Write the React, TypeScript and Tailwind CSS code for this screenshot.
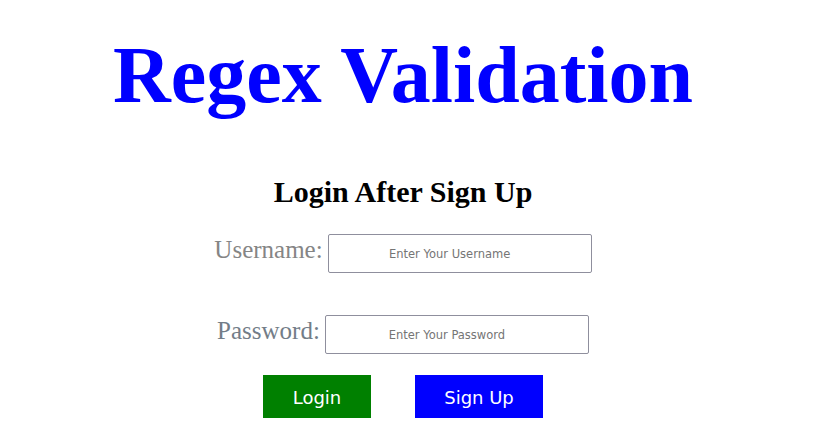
import React, { useState } from "react";

const serif = { fontFamily: '"Liberation Serif", "Times New Roman", serif' };

export default function App() {
  const [username, setUsername] = useState("");
  const [password, setPassword] = useState("");

  const inputCls =
    "w-[264px] h-[39px] border border-[#8f8f9d] rounded-[2px] bg-white pr-[20px] text-center text-[11.5px] text-[#333] placeholder:text-[#757575] outline-none [font-family:'DejaVu_Sans',Verdana,sans-serif]";

  return (
    <div className="w-[806px] min-h-[439px] bg-white flex flex-col items-center pt-[29px]">
      {/* Title */}
      <h1 style={serif} className="text-[80px] leading-[92px] font-bold text-[#0000ff]">
        Regex Validation
      </h1>

      <h2 style={serif} className="mt-[54px] text-[30px] leading-[34px] font-bold text-black">
        Login After Sign Up
      </h2>

      {/* Username */}
      <div className="mt-[25px] flex items-end gap-[5px]">
        <label htmlFor="username" style={serif} className="pb-[9px] text-[25px] leading-[29px] text-[#858585]">
          Username:
        </label>
        <input
          id="username"
          type="text"
          placeholder="Enter Your Username"
          value={username}
          onChange={(e) => setUsername(e.target.value)}
          className={inputCls}
        />
      </div>

      {/* Password */}
      <div className="mt-[42px] flex items-end gap-[5px]">
        <label htmlFor="password" style={serif} className="pb-[9px] text-[25px] leading-[29px] text-[#737d88]">
          Password:
        </label>
        <input
          id="password"
          type="password"
          placeholder="Enter Your Password"
          value={password}
          onChange={(e) => setPassword(e.target.value)}
          className={inputCls}
        />
      </div>

      {/* Buttons */}
      <div className="mt-[21px] flex gap-[44px] [font-family:'DejaVu_Sans',Verdana,sans-serif]">
        <button className="w-[108px] h-[43px] pt-[2px] bg-[#008000] text-white text-[18px]">Login</button>
        <button className="w-[128px] h-[43px] pt-[2px] bg-[#0000ff] text-white text-[18px]">Sign Up</button>
      </div>
    </div>
  );
}
